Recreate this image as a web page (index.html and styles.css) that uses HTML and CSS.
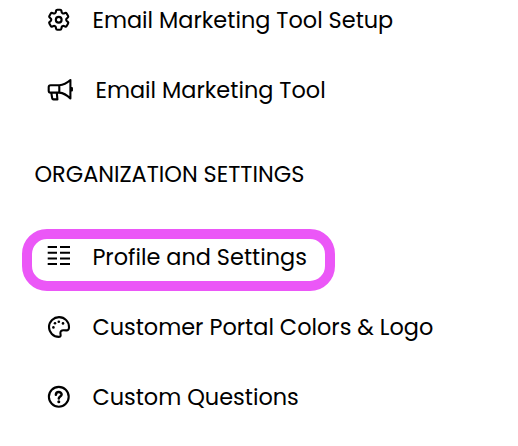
FILE: index.html
```html
<!DOCTYPE html>
<html lang="en">
    <head>
        <meta charset="utf-8">
        <title>Settings</title>
        <link rel="stylesheet" href="styles.css">
    </head>
    <body>
        <div class="menu">
            <div class="menuItem">
                <svg class="menuIcon" viewBox="0 0 28 28">
                    <g transform="translate(-.6 -.6) scale(1.11)" stroke-width="1.9">
                        <path d="M9.594 3.94c.09-.542.56-.94 1.11-.94h2.593c.55 0 1.02.398 1.11.94l.213 1.281c.063.374.313.686.645.87.074.04.147.083.22.127.325.196.72.257 1.075.124l1.217-.456a1.125 1.125 0 0 1 1.37.49l1.296 2.247a1.125 1.125 0 0 1-.26 1.431l-1.003.827c-.293.241-.438.613-.43.992a7.723 7.723 0 0 1 0 .255c-.008.378.137.75.43.991l1.004.827c.424.35.534.955.26 1.43l-1.298 2.247a1.125 1.125 0 0 1-1.369.491l-1.217-.456c-.355-.133-.75-.072-1.076.124a6.47 6.47 0 0 1-.22.128c-.331.183-.581.495-.644.869l-.213 1.281c-.09.543-.56.94-1.11.94h-2.594c-.55 0-1.019-.398-1.11-.94l-.213-1.281c-.062-.374-.312-.686-.644-.87a6.52 6.52 0 0 1-.22-.127c-.325-.196-.72-.257-1.076-.124l-1.217.456a1.125 1.125 0 0 1-1.369-.49l-1.297-2.247a1.125 1.125 0 0 1 .26-1.431l1.004-.827c.292-.24.437-.613.43-.991a6.932 6.932 0 0 1 0-.255c.007-.38-.138-.751-.43-.992l-1.004-.827a1.125 1.125 0 0 1-.26-1.43l1.297-2.247a1.125 1.125 0 0 1 1.37-.491l1.216.456c.356.133.751.072 1.076-.124.072-.044.146-.086.22-.128.332-.183.582-.495.644-.869l.214-1.28Z"/>
                        <circle cx="12" cy="12" r="2.6"/>
                    </g>
                </svg>
                <span class="menuLabel">Email Marketing Tool Setup</span>
            </div>
            <div class="menuItem">
                <svg class="menuIcon" viewBox="0 0 28 28">
                    <path d="M13.3 8.2H4.6Q2.7 8.2 2.7 10.1V13.7Q2.7 15.6 4.6 15.6H13.3ZM13.3 8.2Q19 7.8 24.4 3V21.4Q19 16.2 13.3 15.6M25.9 11V13.4M5.3 15.6L6.2 21.3Q6.4 22.4 7.5 22.4H11.4L10.8 15.6"/>
                </svg>
                <span class="menuLabel wide">Email Marketing Tool</span>
            </div>
            <div class="menuHeading">ORGANIZATION SETTINGS</div>
            <div class="menuItem selected">
                <svg class="menuIcon" viewBox="0 0 28 28">
                    <path class="bars" d="M1.7 3H11M14 3H24M1.7 8.7H11M14 8.7H24M1.7 14.4H11M14 14.4H24M1.7 20H11M14 20H24"/>
                </svg>
                <span class="menuLabel">Profile and Settings</span>
            </div>
            <div class="menuItem">
                <svg class="menuIcon" viewBox="0 0 28 28">
                    <path d="M23 13.2A10 9.9 0 1 0 12.9 22.9C15.3 22.9 14.6 20.8 14.4 19.3C14.2 17.2 15.5 16.1 17.5 16.2L20.3 16.4C22.2 16.5 23 15.2 23 13.2Z"/>
                    <g class="dots">
                        <circle cx="7.4" cy="13.4" r="1.3"/>
                        <circle cx="9" cy="9.3" r="1.3"/>
                        <circle cx="12.8" cy="7.8" r="1.3"/>
                        <circle cx="17" cy="9.4" r="1.3"/>
                    </g>
                </svg>
                <span class="menuLabel">Customer Portal Colors &amp; Logo</span>
            </div>
            <div class="menuItem">
                <svg class="menuIcon" viewBox="0 0 28 28">
                    <circle cx="12.8" cy="12.8" r="9.9"/>
                    <path class="mark" d="M9.9 10.7C10 7.2 15.6 7.3 15.6 10.4C15.6 12.4 12.8 12.5 12.8 14.5"/>
                    <g class="dots"><circle cx="12.8" cy="17.8" r="1.5"/></g>
                </svg>
                <span class="menuLabel">Custom Questions</span>
            </div>
        </div>
    </body>
</html>
```

FILE: styles.css
```css
body {
  margin: 0;
  background: #ffffff;
  color: #000000;
  font-family: Poppins, Inter, sans-serif;
  font-size: 22.4px;
  overflow: hidden;
}
.menu {
  height: 446px;
}
.menuItem {
  display: flex;
  align-items: center;
  height: 40px;
  margin-bottom: 30px;
  padding-left: 46px;
  white-space: nowrap;
}
.menuIcon {
  flex: none;
  width: 28px;
  height: 28px;
  margin: 2px 18.4px 0 0;
  fill: none;
  stroke: #000000;
  stroke-width: 2.1;
  stroke-linecap: round;
  stroke-linejoin: round;
}
.menuIcon .bars {
  stroke-width: 2;
  stroke-linecap: butt;
}
.menuIcon .mark { stroke-width: 2.5; }
.menuIcon .dots {
  fill: #000000;
  stroke: none;
}
.menuHeading {
  height: 40px;
  margin: 44px 0 35px 34.5px;
  line-height: 40px;
  white-space: nowrap;
}
.menuItem.selected {
  box-sizing: border-box;
  width: 313px;
  height: 62px;
  margin: 0 0 16px 22px;
  padding: 0 0 6px 14px;
  border: 10px solid #eb57f7;
  border-radius: 25px;
}
/* the megaphone is a little wider than the other icons */
.menuLabel.wide { margin-left: 3px; }
```
